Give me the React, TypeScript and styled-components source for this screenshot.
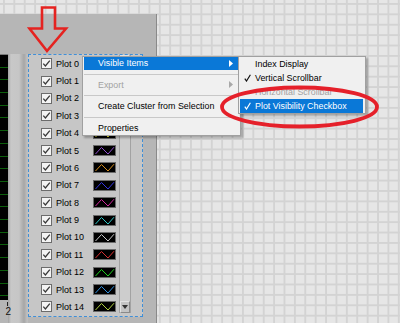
import React from "react";
import styled, { createGlobalStyle } from "styled-components";

const GlobalStyle = createGlobalStyle`
  html, body {
    margin: 0;
    padding: 0;
  }
  body {
    font-family: "Liberation Sans", Arial, sans-serif;
  }
`;

const Canvas = styled.div`
  position: relative;
  width: 400px;
  height: 323px;
  overflow: hidden;
  background-color: #e6e6e6;
  background-image: linear-gradient(#d3d3d3 1.5px, transparent 1.5px),
    linear-gradient(90deg, #d3d3d3 1.5px, transparent 1.5px);
  background-size: 10.4px 10.4px;
  background-position: 3px 3px;
`;

const Frame = styled.div`
  display: flex;
  flex-direction: column;
  width: 156px;
  height: 309px;
  margin-top: 14px;
  background: #b6b6b6;
  border-right: 1px solid #8a8a8a;
`;

const FrameTop = styled.div`
  height: 40px;
  flex-shrink: 0;
`;

const FrameBody = styled.div`
  display: flex;
  flex: 1;
  min-height: 0;
`;

const GraphSide = styled.div`
  display: flex;
  flex-direction: column;
  width: 28px;
  background: linear-gradient(
    to right,
    #b6b6b6 0 8px,
    #a4a4a4 8px,
    #c8c8c8 11px,
    #c6c6c6 19px,
    #a6a6a6 24px,
    #bebebe 27px
  );
`;

const PlotArea = styled.div`
  width: 8px;
  height: 246px;
  box-sizing: border-box;
  border-top: 1px solid #7a7a7a;
  background-color: #000;
  background-image: repeating-linear-gradient(
    to bottom,
    transparent 0 11.7px,
    #0b5e0b 11.7px 12.7px
  );
`;

const Axis = styled.div`
  display: flex;
  flex-direction: column;
  align-items: flex-end;
  width: 8px;
`;

const Tick = styled.div`
  width: 1px;
  height: 4px;
  margin-top: 2px;
  background: #222;
`;

const AxisLabel = styled.span`
  margin-right: -3px;
  font-size: 10px;
  line-height: 11px;
  color: #111;
`;

const Legend = styled.div`
  display: flex;
  width: 113px;
  height: 260.7px;
  border: 1px dashed #3f8fd8;
  background: #c6c6c6;
`;

const LegendList = styled.div`
  display: flex;
  flex-direction: column;
  width: 90px;
`;

const LegendRow = styled.div`
  display: flex;
  align-items: center;
  height: 17.38px;
  padding-left: 12px;
  flex-shrink: 0;
`;

const Checkbox = styled.span`
  display: flex;
  align-items: center;
  justify-content: center;
  width: 11px;
  height: 11px;
  box-sizing: border-box;
  margin-right: 4px;
  border: 1px solid #6c6c6c;
  background: #f4f4f4;
`;

const PlotLabel = styled.span`
  width: 37px;
  font-size: 9px;
  color: #000;
  white-space: nowrap;
`;

const Swatch = styled.span`
  display: flex;
  width: 23px;
  height: 11px;
  box-sizing: border-box;
  border: 1px solid #6a6a6a;
  background: #000;
`;

const Scrollbar = styled.div`
  display: flex;
  flex-direction: column;
  justify-content: space-between;
  width: 12px;
  box-sizing: border-box;
  margin-bottom: 2.5px;
  border-left: 1px solid #a2a2a2;
  border-right: 1px solid #a2a2a2;
  background: #cdcdcd;
`;

const ScrollButton = styled.div`
  display: flex;
  align-items: center;
  justify-content: center;
  height: 12px;
  box-sizing: border-box;
  border: 1px solid;
  border-color: #e2e2e2 #8a8a8a #8a8a8a #e2e2e2;
  background: #c4c4c4;
`;

const ArrowMark = styled.svg`
  position: absolute;
  left: 0;
  top: 0;
`;

const Ellipse = styled.svg`
  position: absolute;
  left: 210px;
  top: 80px;
`;

const Menu = styled.div<{ $left: number; $top: number; $width: number }>`
  position: absolute;
  left: ${(p) => p.$left}px;
  top: ${(p) => p.$top}px;
  width: ${(p) => p.$width}px;
  box-sizing: border-box;
  border: 1px solid #a0a0a0;
  background: #f0f0f0;
  box-shadow: 2px 2px 2px rgba(0, 0, 0, 0.28);
  font-size: 8.9px;
`;

const MenuItem = styled.div<{ $height: number; $active?: boolean; $disabled?: boolean; $check: number }>`
  display: grid;
  grid-template-columns: ${(p) => p.$check}px 1fr 14px;
  align-items: center;
  height: ${(p) => p.$height}px;
  box-sizing: border-box;
  padding-bottom: 1px;
  margin: 0 2px 0 1px;
  white-space: nowrap;
  background: ${(p) => (p.$active ? "#0a78d7" : "transparent")};
  color: ${(p) => (p.$active ? "#fff" : p.$disabled ? "#a2a2a2" : "#000")};
`;

const CheckCell = styled.span`
  display: flex;
  justify-content: center;
`;

const SubArrow = styled.span`
  display: flex;
  justify-content: center;
`;

const Separator = styled.div`
  display: flex;
  align-items: center;
  height: 8.5px;
  &::after {
    content: "";
    flex: 1;
    height: 1px;
    margin: 0 1px;
    background: #c8c8c8;
  }
`;

const plotColors = [
  "#ffffff",
  "#ff3030",
  "#30e030",
  "#4040ff",
  "#e8e830",
  "#9050d0",
  "#d89020",
  "#3535e0",
  "#d02aa0",
  "#30c8c8",
  "#c8c8c8",
  "#d83030",
  "#20d020",
  "#3090e0",
  "#b0d040",
];

const BoxCheck = () => (
  <svg width="9" height="9" viewBox="0 0 9 9">
    <polyline points="1.3,4.6 3.4,6.9 7.8,1.6" fill="none" stroke="#3a3a3a" strokeWidth="1.3" />
  </svg>
);

const MenuCheck = ({ color }: { color: string }) => (
  <svg width="7" height="8" viewBox="0 0 7 8">
    <polyline points="0.8,4.6 2.5,7 6.4,0.8" fill="none" stroke={color} strokeWidth="1.2" />
  </svg>
);

const RightTriangle = ({ color }: { color: string }) => (
  <svg width="4" height="7" viewBox="0 0 4 7">
    <polygon points="0,0 4,3.5 0,7" fill={color} />
  </svg>
);

const PlotRow = ({ index }: { index: number }) => (
  <LegendRow>
    <Checkbox>
      <BoxCheck />
    </Checkbox>
    <PlotLabel>Plot {index}</PlotLabel>
    <Swatch>
      <svg width="21" height="9" viewBox="0 0 21 9">
        <polyline
          points="1.5,8 7.5,1.5 14,8 20,1.2"
          fill="none"
          stroke={plotColors[index]}
          strokeWidth="1"
        />
      </svg>
    </Swatch>
  </LegendRow>
);

const App = () => {
  return (
    <>
      <GlobalStyle />
      <Canvas>
        <Frame>
          <FrameTop />
          <FrameBody>
            <GraphSide>
              <PlotArea />
              <Axis>
                <Tick />
                <AxisLabel>2</AxisLabel>
              </Axis>
            </GraphSide>
            <Legend>
              <LegendList>
                {plotColors.map((_, i) => (
                  <PlotRow key={i} index={i} />
                ))}
              </LegendList>
              <Scrollbar>
                <ScrollButton>
                  <svg width="6" height="4" viewBox="0 0 6 4">
                    <polygon points="0,4 6,4 3,0" fill="#333" />
                  </svg>
                </ScrollButton>
                <ScrollButton>
                  <svg width="6" height="4" viewBox="0 0 6 4">
                    <polygon points="0,0 6,0 3,4" fill="#333" />
                  </svg>
                </ScrollButton>
              </Scrollbar>
            </Legend>
          </FrameBody>
        </Frame>

        <ArrowMark width="70" height="56" viewBox="0 0 70 56">
          <polygon
            points="42,7.5 55,7.5 55,28.5 66,28.5 47,51 29.5,28.5 42,28.5"
            fill="none"
            stroke="#e52320"
            strokeWidth="2.6"
          />
        </ArrowMark>

        <Menu $left={82} $top={56} $width={159}>
          <MenuItem $height={13} $active $check={14}>
            <span />
            <span>Visible Items</span>
            <SubArrow>
              <RightTriangle color="#fff" />
            </SubArrow>
          </MenuItem>
          <Separator />
          <MenuItem $height={13} $disabled $check={14}>
            <span />
            <span>Export</span>
            <SubArrow>
              <RightTriangle color="#a8a8a8" />
            </SubArrow>
          </MenuItem>
          <Separator />
          <MenuItem $height={13} $check={14}>
            <span />
            <span>Create Cluster from Selection</span>
            <span />
          </MenuItem>
          <Separator />
          <MenuItem $height={13} $check={14}>
            <span />
            <span>Properties</span>
            <span />
          </MenuItem>
        </Menu>

        <Menu $left={238} $top={56} $width={128}>
          <MenuItem $height={14} $check={15}>
            <span />
            <span>Index Display</span>
            <span />
          </MenuItem>
          <MenuItem $height={14} $check={15}>
            <CheckCell>
              <MenuCheck color="#111" />
            </CheckCell>
            <span>Vertical Scrollbar</span>
            <span />
          </MenuItem>
          <MenuItem $height={14} $disabled $check={15}>
            <span />
            <span>Horizontal Scrollbar</span>
            <span />
          </MenuItem>
          <MenuItem $height={14} $active $check={15}>
            <CheckCell>
              <MenuCheck color="#fff" />
            </CheckCell>
            <span>Plot Visibility Checkbox</span>
            <span />
          </MenuItem>
        </Menu>

        <Ellipse width="180" height="56" viewBox="0 0 180 56">
          <ellipse cx="89.5" cy="27" rx="77.5" ry="19.5" fill="none" stroke="#e5202a" strokeWidth="3.8" />
        </Ellipse>
      </Canvas>
    </>
  );
};

export default App;
